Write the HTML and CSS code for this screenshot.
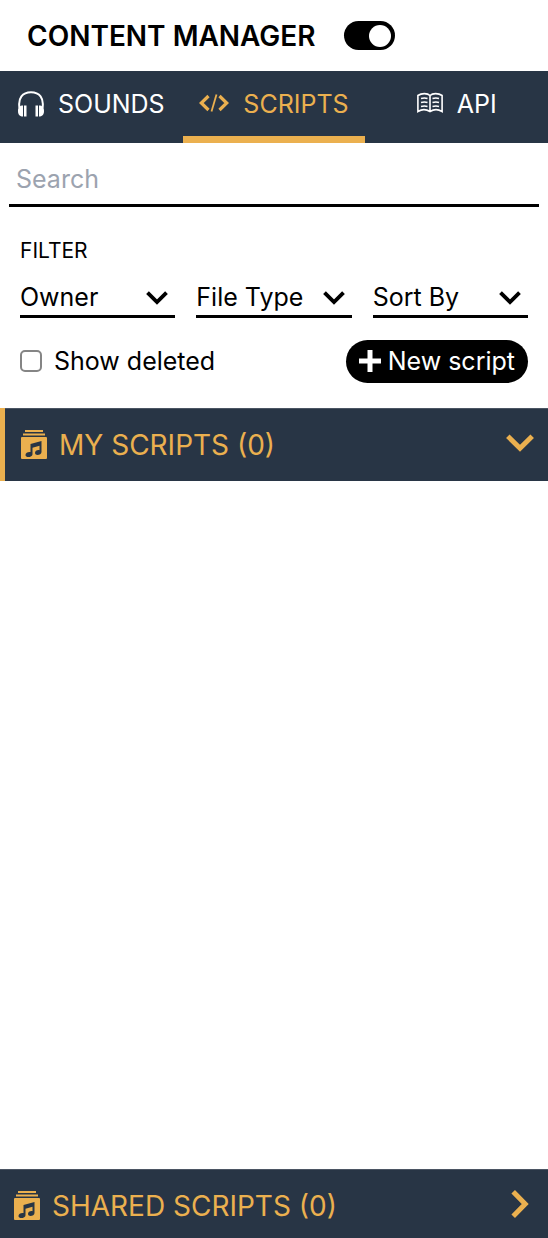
FILE: index.html
```html
<!DOCTYPE html>
<html lang="en">
<head>
<meta charset="utf-8">
<meta name="viewport" content="width=device-width, initial-scale=1">
<title>Content Manager</title>
<link rel="stylesheet" href="styles.css">
</head>
<body>
<svg class="symbols" aria-hidden="true">
  <symbol id="library" viewBox="0 0 26 30">
    <path fill="currentColor" d="M4 0h18v2H4zM2 3.500h22v2H2z"/>
    <path fill="currentColor" fill-rule="evenodd" d="M1 7h24q1 0 1 1v20q0 1-1 1H1q-1 0-1-1V8q0-1 1-1zM9.500 14v8c-2.500-.4-5 .8-5 3 0 3.200 7 2.500 7-.8v-6.400l7-2v4.400c-2.500-.4-4.500.8-4.500 2.800 0 3 6.500 2.300 6.500-1V11z"/>
  </symbol>
  <symbol id="chevron" viewBox="0 0 28 18">
    <path fill="none" stroke="currentColor" stroke-width="5" d="M1.800 2.200 14 14.200 26.200 2.200"/>
  </symbol>
</svg>
<main class="manager">
  <header class="header">
    <h1 class="title">CONTENT MANAGER</h1>
    <button class="toggle" type="button" role="switch" aria-checked="true" aria-label="Toggle content manager"><span class="knob"></span></button>
  </header>
  <nav class="tabs">
    <button class="tab" type="button">
      <svg class="tab-icon" viewBox="0 0 26 26" aria-hidden="true"><path fill="none" stroke="currentColor" stroke-width="2" d="M1.500 17C-.2 7 4.500 1.200 13 1.200S26.200 7 24.500 17"/><path fill="currentColor" d="M5 14.500V25.500c-3 0-5-1.500-5-5.500s2-5.500 5-5.500zM6 14.500h2.500v11H6zM21 14.500V25.500c3 0 5-1.500 5-5.500s-2-5.500-5-5.500zM17.500 14.500H20v11h-2.500z"/></svg>
      SOUNDS
    </button>
    <button class="tab active" type="button" aria-current="page">
      <svg class="tab-icon code" viewBox="0 0 30 26" aria-hidden="true"><path fill="none" stroke="currentColor" stroke-width="3.200" d="M9.500 5 2.300 12l7.200 7M20.500 5l7.200 7-7.200 7"/><path fill="none" stroke="currentColor" stroke-width="1.800" d="M17.500 3.500 12.500 20.500"/></svg>
      SCRIPTS
    </button>
    <button class="tab" type="button">
      <svg class="tab-icon" viewBox="0 0 26 26" aria-hidden="true"><path fill="none" stroke="currentColor" stroke-width="1.600" d="M13 4.500C10.500 2 4.500 2 .9 4.500v16C4.500 18.300 9.500 18.300 13 20.500c3.500-2.200 8.500-2.200 12.100 0v-16C21.500 2 15.500 2 13 4.500v16"/><path fill="none" stroke="currentColor" stroke-width="1.600" d="M4 7.500q3.500-1 6.500 0M4 11.500q3.500-1 6.500 0M4 15.500q3.500-1 6.500 0M15.500 7.500q3.500-1 6.500 0M15.500 11.500q3.500-1 6.500 0M15.500 15.500q3.500-1 6.500 0"/></svg>
      API
    </button>
  </nav>
  <div class="search"><input class="search-input" type="search" placeholder="Search" aria-label="Search"></div>
  <section class="filters" aria-labelledby="filter-title">
    <h2 class="filter-title" id="filter-title">FILTER</h2>
    <div class="selects">
      <div class="field"><select class="select" aria-label="Owner"><option>Owner</option></select><svg class="select-arrow" aria-hidden="true"><use href="#chevron"/></svg></div>
      <div class="field"><select class="select" aria-label="File Type"><option>File Type</option></select><svg class="select-arrow" aria-hidden="true"><use href="#chevron"/></svg></div>
      <div class="field"><select class="select" aria-label="Sort By"><option>Sort By</option></select><svg class="select-arrow" aria-hidden="true"><use href="#chevron"/></svg></div>
    </div>
    <div class="actions">
      <label class="check"><input class="checkbox" type="checkbox">Show deleted</label>
      <button class="new-script" type="button"><svg class="plus" viewBox="0 0 22 22" aria-hidden="true"><path stroke="currentColor" stroke-width="5" d="M11 0v22M0 11h22"/></svg>New script</button>
    </div>
  </section>
  <section class="collection open">
    <button class="collection-head mine" type="button" aria-expanded="true"><svg class="library" aria-hidden="true"><use href="#library"/></svg><span class="collection-name">MY SCRIPTS (0)</span><svg class="arrow" aria-hidden="true"><use href="#chevron"/></svg></button>
  </section>
  <section class="collection">
    <button class="collection-head shared" type="button" aria-expanded="false"><svg class="library" aria-hidden="true"><use href="#library"/></svg><span class="collection-name">SHARED SCRIPTS (0)</span><svg class="arrow right" aria-hidden="true"><use href="#chevron"/></svg></button>
  </section>
</main>
</body>
</html>
```
FILE: styles.css
```css
* { box-sizing: border-box; }
body { margin: 0; background: #fff; color: #000; font: 25px/32px Inter, "Liberation Sans", sans-serif; }
button, input, select { margin: 0; padding: 0; border: 0; border-radius: 0; background: none; color: inherit; font: inherit; }
svg { display: block; flex: none; }
.symbols { position: absolute; width: 0; height: 0; }
.manager { display: flex; flex-direction: column; min-height: 100vh; }
.header { display: flex; align-items: center; gap: 28px; height: 71px; padding-left: 27px; }
.title { margin: 0; font-size: 28px; font-weight: 600; }
.toggle { display: flex; align-items: center; justify-content: flex-end; width: 51px; height: 29px; padding: 0 4px; border-radius: 15px; background: #000; }
.knob { width: 22px; height: 22px; border-radius: 50%; background: #fff; }
.tabs { display: grid; grid-template-columns: repeat(3, 1fr); background: #283545; color: #fff; }
.tab { display: flex; align-items: center; justify-content: center; gap: 14px; height: 72px; padding-top: 1px; border-bottom: 7px solid transparent; }
.tab.active { border-color: #ebb04f; color: #ebb04f; }
.tab-icon { width: 26px; height: 26px; }
.tab-icon.code { width: 30px; }
.search { margin: 0 9px; border-bottom: 3px solid #000; }
.search-input { display: block; width: 100%; height: 61px; padding: 11px 7px 0; appearance: none; outline-offset: 2px; }
.search-input::placeholder { color: #9ca3af; opacity: 1; }
.filters { padding: 28px 20px 25px; }
.filter-title { margin: 0; font-size: 21px; font-weight: 400; line-height: 32px; }
.selects { display: grid; grid-template-columns: repeat(3, 1fr); gap: 21px; margin-top: 13px; }
.field { display: grid; align-items: center; border-bottom: 3px solid #000; }
.select { grid-area: 1 / 1; width: 100%; height: 35px; padding-bottom: 2px; appearance: none; }
.select-arrow { grid-area: 1 / 1; justify-self: end; width: 22px; height: 14px; margin-right: 7px; pointer-events: none; }
.actions { display: flex; align-items: center; justify-content: space-between; margin-top: 22px; }
.check { display: flex; align-items: center; gap: 12px; padding-bottom: 2px; }
.checkbox { width: 22px; height: 22px; border: 2px solid #858585; border-radius: 5px; background: #fff; appearance: none; }
.checkbox:checked { background: #000; }
.new-script { display: flex; align-items: center; gap: 7px; height: 43px; padding: 0 13px 2px; border-radius: 22px; background: #000; color: #fff; }
.plus { width: 22px; height: 22px; }
.open { flex: 1; }
.collection-head { display: flex; align-items: center; width: 100%; height: 73px; background: #283545; box-shadow: inset 0 1px #4b5563; color: #ebb04f; font-size: 28px; text-align: left; }
.mine { padding: 0 14px 0 16px; border-left: 5px solid #ebb04f; }
.shared { height: 69px; padding: 4px 14px 0; }
.library { width: 26px; height: 30px; margin-right: 12px; }
.collection-name { flex: 1; }
.arrow { width: 28px; height: 18px; margin-bottom: 3px; }
.right { transform: rotate(-90deg); }
```
